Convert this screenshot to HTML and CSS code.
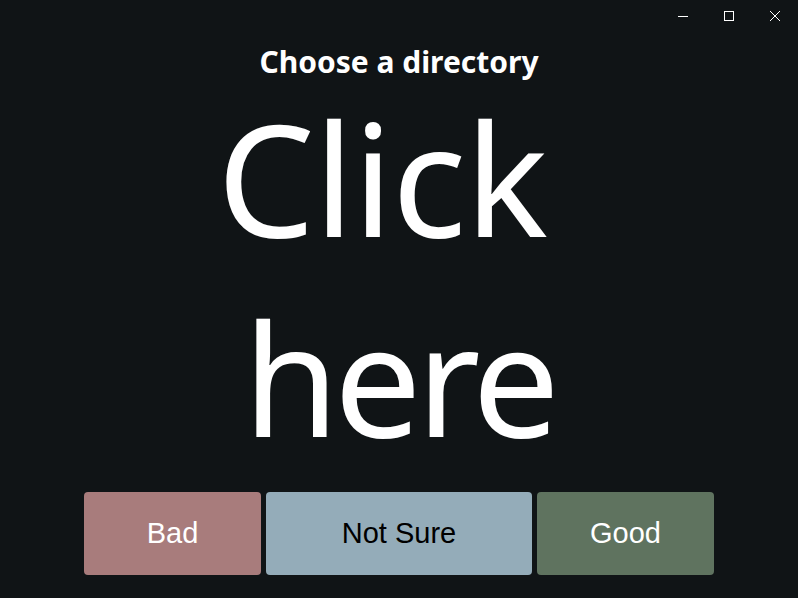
FILE: index.html
```html
<!DOCTYPE html>
<html>
<head>
<meta charset="utf-8">
<link rel="stylesheet" href="styles.css">
</head>
<body>
<div class="window">
  <div class="titlebar">
    <div class="ctrl"><svg width="12" height="12" viewBox="0 0 12 12"><path d="M1 6.5h10" stroke="#fff" stroke-width="1"/></svg></div>
    <div class="ctrl"><svg width="12" height="12" viewBox="0 0 12 12"><rect x="1.5" y="1.5" width="9" height="9" fill="none" stroke="#fff" stroke-width="1"/></svg></div>
    <div class="ctrl"><svg width="12" height="12" viewBox="0 0 12 12"><path d="M1 1L11 11M11 1L1 11" stroke="#fff" stroke-width="1"/></svg></div>
  </div>
  <h1 class="title">Choose a directory</h1>
  <div class="big">
    <div class="line first">Click</div>
    <div class="line second">here</div>
  </div>
  <div class="buttons">
    <button class="btn bad">Bad</button>
    <button class="btn unsure">Not Sure</button>
    <button class="btn good">Good</button>
  </div>
</div>
</body>
</html>
```
FILE: styles.css
```css
html, body {
  margin: 0;
  padding: 0;
  background: #101416;
  width: 798px;
  height: 598px;
  overflow: hidden;
}
.window {
  display: flex;
  flex-direction: column;
  height: 598px;
  color: #fff;
}
.titlebar {
  display: flex;
  justify-content: flex-end;
  height: 32px;
}
.ctrl {
  width: 46px;
  height: 32px;
  display: flex;
  align-items: center;
  justify-content: center;
}
.ctrl svg { display: block; }
.title {
  margin: 16px 0 0;
  font-family: "Noto Sans", sans-serif;
  font-weight: 700;
  font-size: 30px;
  line-height: 28px;
  text-align: center;
}
.big {
  margin-top: 1px;
  font-family: "Noto Sans", sans-serif;
  font-size: 155px;
  line-height: 200px;
  letter-spacing: -1px;
  text-align: center;
}
.line.first {
  padding-right: 34px;
}
.line.second {
  letter-spacing: -5px;
}
.buttons {
  margin-top: auto;
  margin-bottom: 23px;
  padding: 0 84px;
  display: flex;
  gap: 5px;
  height: 83px;
}
.btn {
  border: none;
  border-radius: 4px;
  font-family: "Liberation Sans", Arial, sans-serif;
  font-size: 29px;
  padding: 0;
}
.bad { flex: 2; background: #a87c7c; color: #fff; }
.unsure { flex: 3; background: #94acb9; color: #000; }
.good { flex: 2; background: #5f735f; color: #fff; }
```
